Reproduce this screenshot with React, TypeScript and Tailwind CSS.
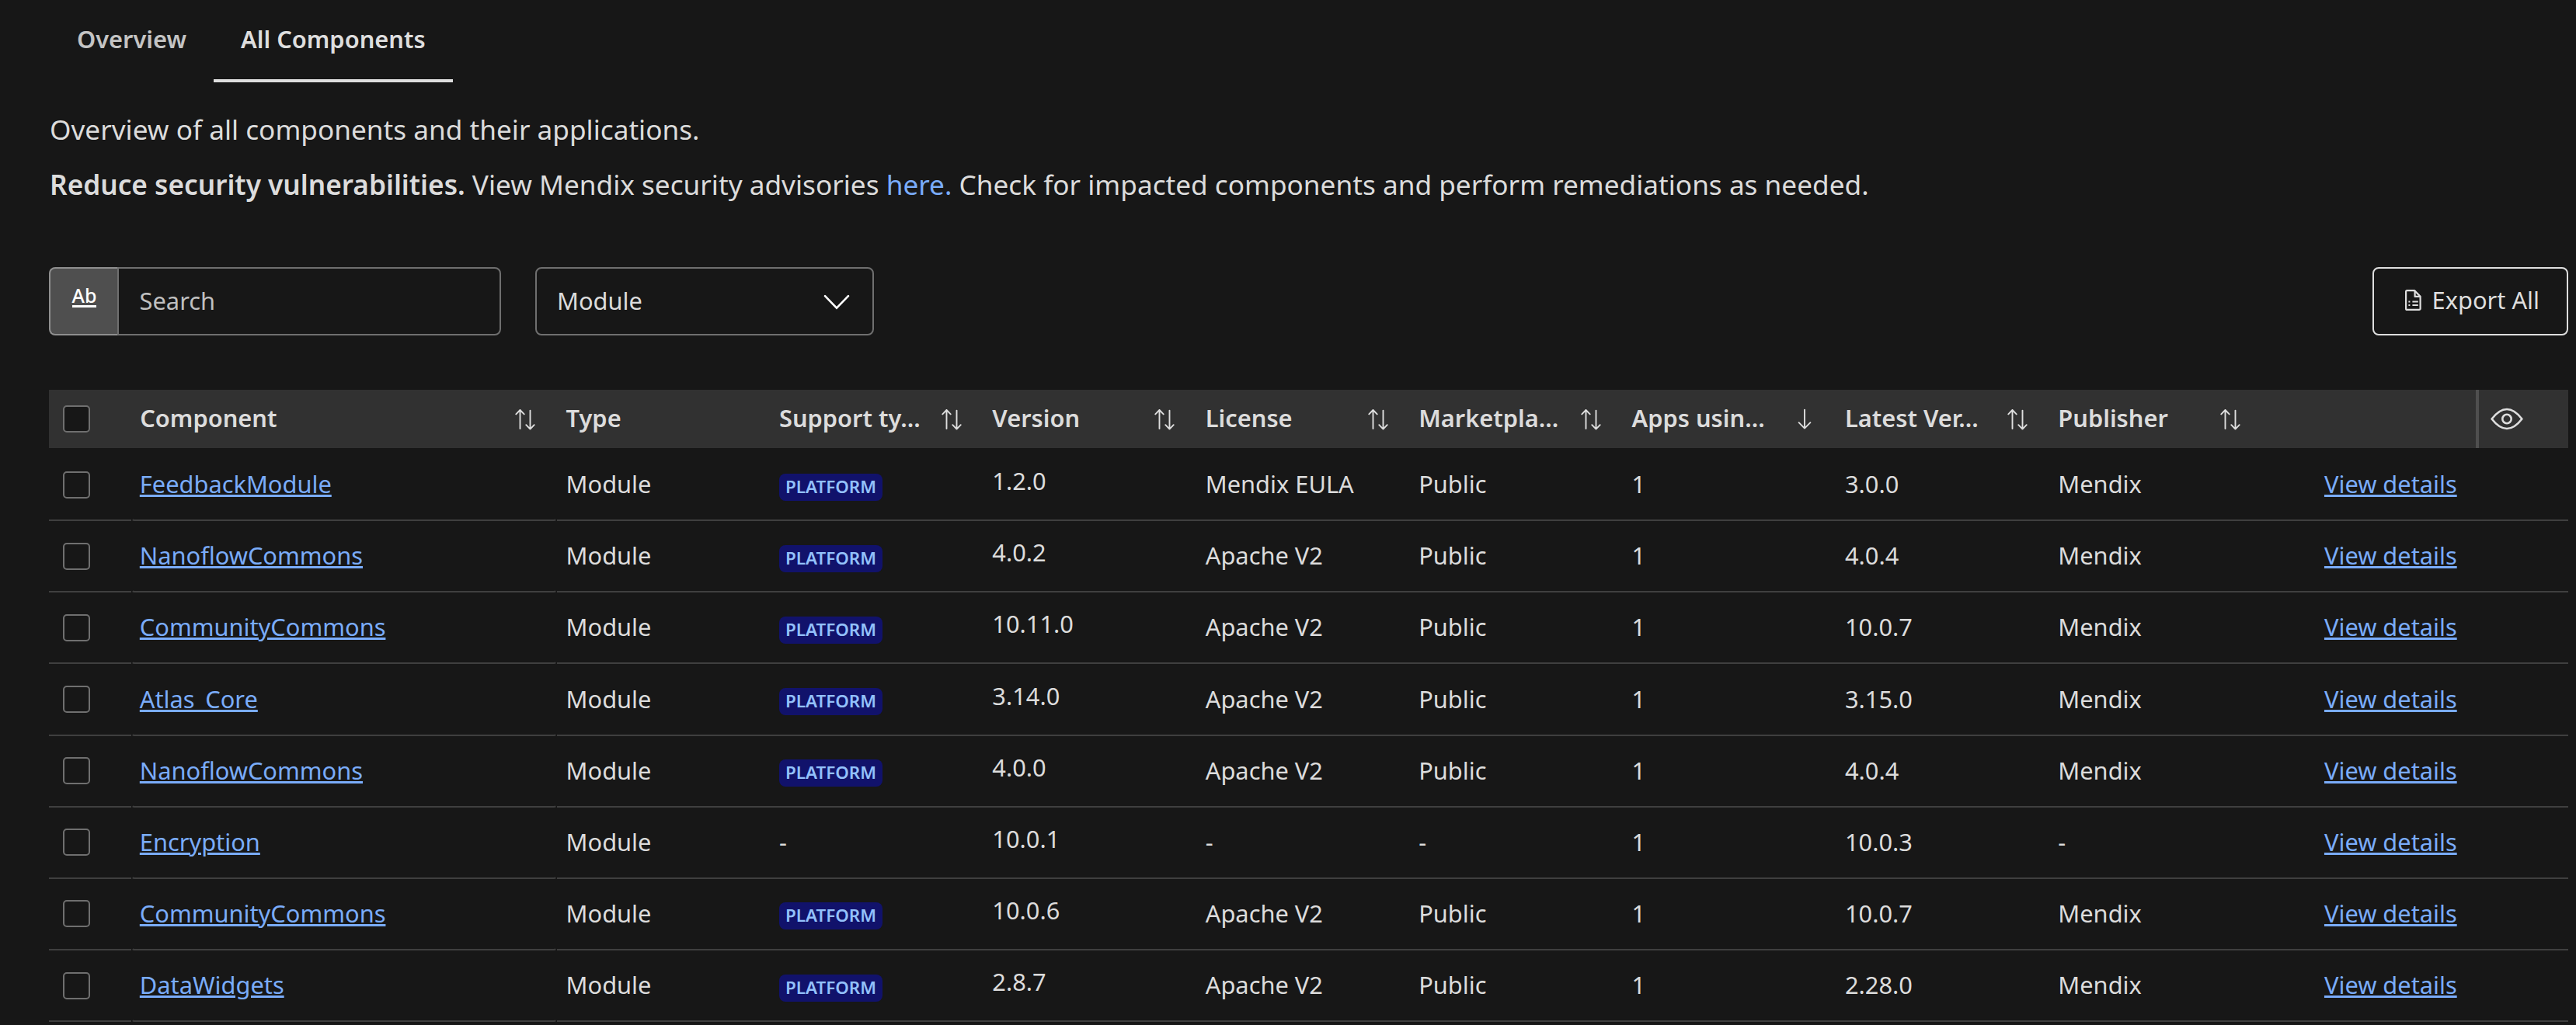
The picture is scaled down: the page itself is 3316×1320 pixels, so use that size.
type Row = {
  name: string;
  platform: boolean;
  version: string;
  license: string;
  visibility: string;
  latest: string;
  publisher: string;
};

const rows: Row[] = [
  { name: "FeedbackModule", platform: true, version: "1.2.0", license: "Mendix EULA", visibility: "Public", latest: "3.0.0", publisher: "Mendix" },
  { name: "NanoflowCommons", platform: true, version: "4.0.2", license: "Apache V2", visibility: "Public", latest: "4.0.4", publisher: "Mendix" },
  { name: "CommunityCommons", platform: true, version: "10.11.0", license: "Apache V2", visibility: "Public", latest: "10.0.7", publisher: "Mendix" },
  { name: "Atlas_Core", platform: true, version: "3.14.0", license: "Apache V2", visibility: "Public", latest: "3.15.0", publisher: "Mendix" },
  { name: "NanoflowCommons", platform: true, version: "4.0.0", license: "Apache V2", visibility: "Public", latest: "4.0.4", publisher: "Mendix" },
  { name: "Encryption", platform: false, version: "10.0.1", license: "-", visibility: "-", latest: "10.0.3", publisher: "-" },
  { name: "CommunityCommons", platform: true, version: "10.0.6", license: "Apache V2", visibility: "Public", latest: "10.0.7", publisher: "Mendix" },
  { name: "DataWidgets", platform: true, version: "2.8.7", license: "Apache V2", visibility: "Public", latest: "2.28.0", publisher: "Mendix" },
];

type Sort = "none" | "both" | "down";

const headers: { label: string; sort: Sort }[] = [
  { label: "Component", sort: "both" },
  { label: "Type", sort: "none" },
  { label: "Support ty…", sort: "both" },
  { label: "Version", sort: "both" },
  { label: "License", sort: "both" },
  { label: "Marketpla…", sort: "both" },
  { label: "Apps usin…", sort: "down" },
  { label: "Latest Ver…", sort: "both" },
  { label: "Publisher", sort: "both" },
];

const grid = "grid grid-cols-[105.8px_548.4px_repeat(9,274.4px)_1fr]";
const cell = "flex items-center border-b-2 border-[#3f3f3f] pl-[11.4px] pb-[2px]";
const link = "text-[#7aacfa] underline decoration-[3px] underline-offset-[2px]";

function SortIcon({ sort }: { sort: Sort }) {
  if (sort === "none") return null;
  return (
    <svg className="mr-[28px] h-[28px] w-[26px] shrink-0" viewBox="0 0 26 28" fill="none" stroke="#dedede" strokeWidth="1.9" strokeLinecap="round" strokeLinejoin="round">
      {sort === "both" ? (
        <>
          <path d="M6.5 26V2M1.3 7.4L6.5 2l5.2 5.4" />
          <path d="M19.5 2.6v24M14.3 21.2l5.2 5.4 5.2-5.4" />
        </>
      ) : (
        <path d="M13 1.6v24M5.6 18.2l7.4 7.4 7.4-7.4" />
      )}
    </svg>
  );
}

function EyeIcon() {
  return (
    <svg className="h-[29px] w-[42px]" viewBox="0 0 42 29" fill="none" stroke="#dedede" strokeWidth="2.6" strokeLinejoin="round">
      <path d="M1.6 14.5C6.6 8 13 2 21 2s14.4 6 19.4 12.5C35.4 21 29 27 21 27S6.6 21 1.6 14.5Z" />
      <circle cx="21" cy="14.5" r="5.7" />
    </svg>
  );
}

function ExportIcon() {
  return (
    <svg className="h-[27px] w-[21px]" viewBox="0 0 21 27" fill="none" stroke="#dedede" strokeWidth="2.2" strokeLinejoin="round">
      <path d="M2.6 1.1H12L19.6 8.7V24.4a1.5 1.5 0 0 1-1.5 1.5H2.6a1.5 1.5 0 0 1-1.5-1.5V2.6a1.5 1.5 0 0 1 1.5-1.5Z" />
      <path d="M12.6 1.1V8.9h7" />
      <path d="M4.4 15.6h2M9.4 15.6h7.4M4.4 20h2M9.4 20h7.4" strokeWidth="2" />
    </svg>
  );
}

function Checkbox() {
  return <div className="h-[35px] w-[35px] rounded-[5px] border-2 border-[#6f6f6f] bg-[#171717]" />;
}

export default function App() {
  return (
    <div className="h-[1320px] w-[3316px] overflow-hidden bg-[#171717] pr-[10px] pl-[63px] font-['Noto_Sans',sans-serif] text-[30.8px] leading-[42px] text-[#dcdcdc]">
      <nav className="ml-px flex h-[106px] font-semibold">
        <div className="w-[211px] pt-[29px] pl-[35px] text-[#c4c4c4]">Overview</div>
        <div className="w-[308px] border-b-4 border-[#dedede] pt-[29px] pl-[35px] text-[#dedede]">All Components</div>
      </nav>

      <p className="mt-[36px] pl-px text-[35.2px] leading-[48px]">Overview of all components and their applications.</p>
      <p className="mt-[23px] pl-px text-[35.2px] leading-[48px]">
        <span className="font-semibold">Reduce security vulnerabilities.</span> View Mendix security advisories{" "}
        <a className="text-[#7aacfa]">here.</a> Check for impacted components and perform remediations as needed.
      </p>

      <div className="mt-[83px] flex h-[88px]">
        <div className="flex w-[582px]">
          <div className="flex w-[88px] items-start justify-center rounded-l-[8px] border-2 border-r-0 border-[#8f8f8f] bg-[#4f4f4f] pt-[22px] pl-px text-[25px] font-medium text-white">
            <span className="border-b-[3px] border-white leading-[25px]">Ab</span>
          </div>
          <div className="flex flex-1 items-center rounded-r-[8px] border-2 border-[#6f6f6f] pb-[2px] pl-[26.6px] text-[#c0c0c0]">Search</div>
        </div>
        <div className="ml-[44px] flex w-[436px] items-center justify-between rounded-[8px] border-2 border-[#6f6f6f] pr-[29px] pb-[2px] pl-[26px]">
          Module
          <svg className="mt-[4px] h-[20px] w-[34px]" viewBox="0 0 34 20" fill="none" stroke="#ffffff" strokeWidth="2.6" strokeLinecap="round">
            <path d="M2 2.2L17 17.6L32 2.2" />
          </svg>
        </div>
        <div className="ml-auto flex w-[252px] items-center rounded-[8px] border-2 border-[#dedede] pb-[4px] pl-[40px] text-[#dedede]">
          <ExportIcon />
          <span className="ml-[13.6px]">Export All</span>
        </div>
      </div>

      <div className={`${grid} mt-[70px] h-[75px] bg-[#313131] font-semibold`}>
        <div className="flex items-center pl-[18px]">
          <Checkbox />
        </div>
        {headers.map((h) => (
          <div key={h.label} className="flex items-center justify-between pl-[11.4px]">
            <span className="pb-[3px] whitespace-nowrap">{h.label}</span>
            <SortIcon sort={h.sort} />
          </div>
        ))}
        <div />
        <div className="flex items-center border-l-4 border-[#4f4f4f] pl-[15px]">
          <EyeIcon />
        </div>
      </div>

      <div className="mt-[2.05px]">
        {rows.map((r, i) => (
          <div key={i} className={`${grid} h-[92.15px]`}>
            <div className="flex items-center border-b-2 border-[#3f3f3f] pl-[18px]">
              <Checkbox />
            </div>
            <div className="flex items-center rounded-b-[4px] border-x-2 border-b-2 border-x-transparent border-b-[#3f3f3f] pb-[2px] pl-[9px]">
              <a className={link}>{r.name}</a>
            </div>
            <div className={cell}>Module</div>
            <div className={cell}>
              {r.platform ? (
                <span className="mt-[8px] h-[35px] w-[133px] rounded-[8px] bg-[#11126b] text-center text-[22.4px] leading-[34px] font-semibold text-[#93c1fb]">PLATFORM</span>
              ) : (
                "-"
              )}
            </div>
            <div className={cell}>
              <span className="mb-[8px]">{r.version}</span>
            </div>
            <div className={cell}>{r.license}</div>
            <div className={cell}>{r.visibility}</div>
            <div className={cell}>1</div>
            <div className={cell}>{r.latest}</div>
            <div className={cell}>{r.publisher}</div>
            <div className="flex items-center justify-end border-b-2 border-[#3f3f3f] pr-[24px] pb-[2px]">
              <a className={link}>View details</a>
            </div>
            <div className="border-b-2 border-[#3f3f3f]" />
          </div>
        ))}
      </div>
    </div>
  );
}
